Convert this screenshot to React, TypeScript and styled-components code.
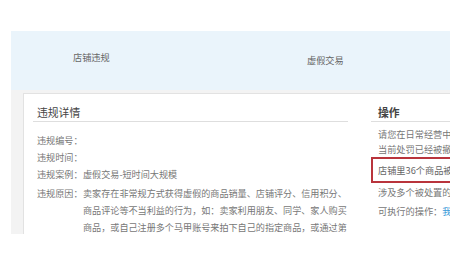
import styled, { createGlobalStyle } from "styled-components";

const GlobalStyle = createGlobalStyle`
  html, body {
    margin: 0;
    padding: 0;
    background: #fff;
    overflow: hidden;
  }
  body {
    font-family: "Noto Sans CJK SC", "Liberation Sans", sans-serif;
  }
`;

const tabs = [
  { label: "店铺违规", drop: 0 },
  { label: "虚假交易", drop: 3 },
];

const rows = [
  { label: "违规编号：", lines: [""] },
  { label: "违规时间：", lines: [""] },
  { label: "违规案例：", lines: ["虚假交易-短时间大规模"] },
  {
    label: "违规原因：",
    lines: [
      "卖家存在非常规方式获得虚假的商品销量、店铺评分、信用积分、",
      "商品评论等不当利益的行为，如：卖家利用朋友、同学、家人购买",
      "商品，或自己注册多个马甲账号来拍下自己的指定商品，或通过第",
    ],
    gap: 2,
  },
];

export default function App() {
  return (
    <Page>
      <GlobalStyle />
      <Panel>
        <TabBar>
          {tabs.map((t) => (
            <Tab key={t.label} $drop={t.drop}>
              {t.label}
            </Tab>
          ))}
        </TabBar>
        <Body>
          <Card>
            <LeftCol>
              <SectionTitle $indent={4}>违规详情</SectionTitle>
              <RowList>
                {rows.map((r) => (
                  <Row key={r.label} $gap={r.gap ?? 0}>
                    <Label>{r.label}</Label>
                    <Value>
                      {r.lines.map((l, i) => (
                        <Line key={i}>{l || "\u00a0"}</Line>
                      ))}
                    </Value>
                  </Row>
                ))}
              </RowList>
            </LeftCol>
            <RightCol>
              <SectionTitle $indent={7} $bold>
                操作
              </SectionTitle>
              <Para>
                <Line>请您在日常经营中</Line>
                <Line>当前处罚已经被撤</Line>
              </Para>
              <Alert>店铺里36个商品被</Alert>
              <Note>涉及多个被处置的</Note>
              <Action>
                可执行的操作：<Link>我</Link>
              </Action>
            </RightCol>
          </Card>
        </Body>
      </Panel>
    </Page>
  );
}

const Page = styled.div`
  width: 450px;
  height: 272px;
  box-sizing: border-box;
  padding: 31px 0 0 11px;
  overflow: hidden;
  background: #fff;
`;

const Panel = styled.div`
  width: 600px;
  height: 203px;
  overflow: hidden;
  background: #f3f3f3;
  display: flex;
  flex-direction: column;
`;

const TabBar = styled.div`
  height: 59px;
  flex: none;
  background: #eaf4fb;
  display: grid;
  grid-template-columns: 234px auto;
  align-items: start;
  padding: 20px 0 0 62px;
  box-sizing: border-box;
`;

const Tab = styled.div<{ $drop: number }>`
  margin-top: ${({ $drop }) => $drop}px;
  font-size: 9.2px;
  line-height: 12px;
  color: #666;
  white-space: nowrap;
`;

const Body = styled.div`
  flex: 1;
  padding: 3px 0 0 12px;
  display: flex;
  min-height: 0;
`;

const Card = styled.div`
  flex: 1;
  background: #fff;
  border: 1px solid #e2e2e2;
  border-right: none;
  border-bottom: none;
  padding-left: 9px;
  display: flex;
  align-items: flex-start;
`;

const LeftCol = styled.div`
  width: 315px;
  flex: none;
`;

const RightCol = styled.div`
  width: 90px;
  flex: none;
  margin-left: 23px;
  font-size: 9.2px;
  color: #777;
  white-space: nowrap;
`;

const SectionTitle = styled.div<{ $indent: number; $bold?: boolean }>`
  padding: 11px 0 2px ${({ $indent }) => $indent}px;
  font-size: 10.8px;
  line-height: 14px;
  color: #444;
  font-weight: ${({ $bold }) => ($bold ? 600 : 400)};
  border-bottom: 1px solid #dedede;
`;

const RowList = styled.div`
  padding: 10px 0 0 4px;
`;

const Row = styled.div<{ $gap: number }>`
  display: flex;
  margin-top: ${({ $gap }) => $gap}px;
  font-size: 9.1px;
  line-height: 17px;
  color: #777;
  white-space: nowrap;
`;

const Label = styled.div`
  flex: none;
  width: 46px;
`;

const Value = styled.div`
  flex: 1;
`;

const Line = styled.div``;

const Para = styled.div`
  margin-top: 5px;
  padding-left: 7px;
  line-height: 15px;
`;

const Alert = styled.div`
  height: 26px;
  box-sizing: border-box;
  border: 2px solid #b9343c;
  border-right: none;
  padding-left: 5px;
  line-height: 22px;
  color: #666;
`;

const Note = styled.div`
  margin-top: 2px;
  padding-left: 7px;
  line-height: 15px;
`;

const Action = styled.div`
  margin-top: 4px;
  padding-left: 7px;
  line-height: 15px;
`;

const Link = styled.span`
  color: #3a9ad9;
`;
